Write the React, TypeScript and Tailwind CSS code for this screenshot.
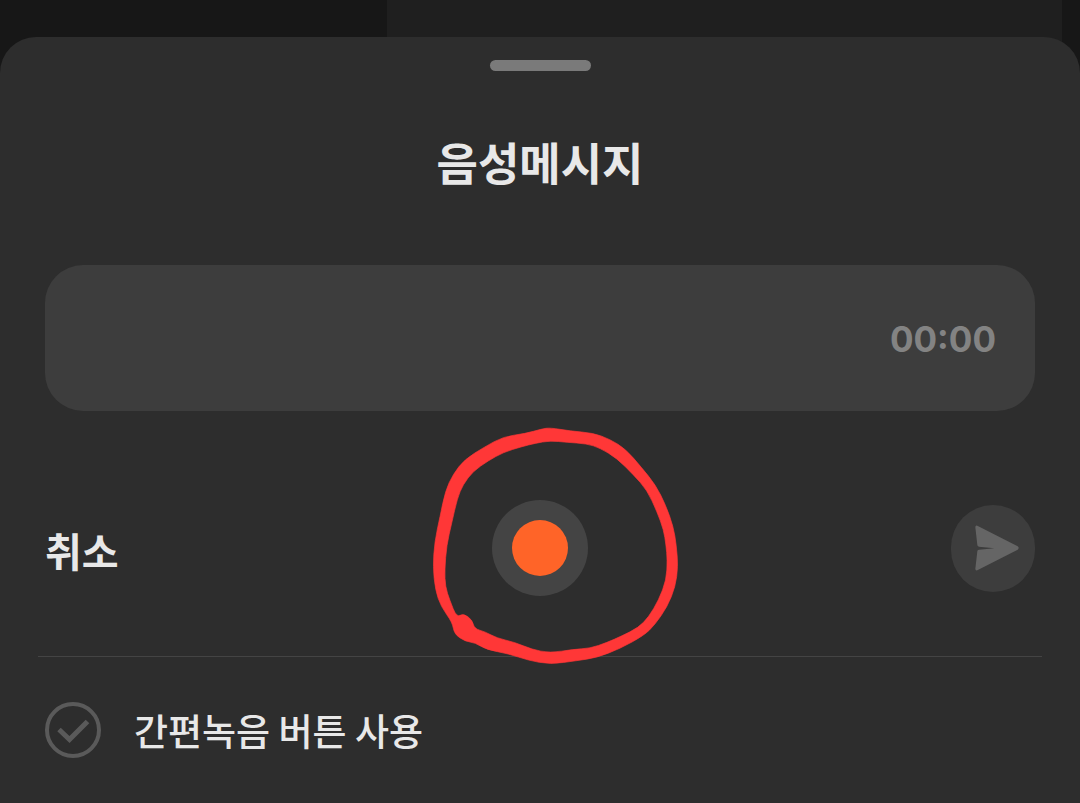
import { useEffect, useState } from "react";

type Point = [number, number];

const ringOuter: Point[] = [
  [390, 23], [450, 33], [520, 39], [570, 58], [617, 87], [665, 143], [707, 195],
  [737, 255], [760, 320], [769, 375], [774, 440], [766, 500], [742, 560],
  [704, 615], [672, 646], [600, 686], [530, 713], [470, 722], [390, 733],
  [325, 721], [265, 701], [200, 689], [165, 668], [135, 664], [103, 642],
  [97, 607], [63, 560], [46, 510], [39, 440], [44, 365], [60, 290], [76, 213],
  [99, 163], [134, 118], [195, 80], [250, 50], [315, 41], [365, 27],
];

const ringInner: Point[] = [
  [390, 62], [440, 67], [500, 71], [540, 84], [591, 115], [641, 165],
  [681, 210], [711, 275], [731, 330], [738, 375], [742, 420], [739, 480],
  [716, 540], [686, 591], [655, 623], [605, 648], [560, 668], [510, 685],
  [460, 688], [390, 699], [335, 688], [285, 667], [230, 654], [195, 635],
  [163, 626], [157, 600], [130, 580], [110, 592], [89, 540], [76, 500],
  [74, 450], [80, 375], [95, 310], [112, 235], [129, 194], [159, 154],
  [205, 122], [250, 97], [305, 80], [345, 70],
];

// closed curve through the midpoints of the list
function smooth(points: Point[]) {
  const mid = (a: Point, b: Point) => `${(a[0] + b[0]) / 2} ${(a[1] + b[1]) / 2}`;
  const last = points[points.length - 1];
  let d = `M${mid(last, points[0])}`;
  points.forEach((p, i) => {
    d += ` Q${p[0]} ${p[1]} ${mid(p, points[(i + 1) % points.length])}`;
  });
  return d + " Z";
}

function formatTime(total: number) {
  const m = String(Math.floor(total / 60)).padStart(2, "0");
  const s = String(total % 60).padStart(2, "0");
  return `${m}:${s}`;
}

function SendIcon() {
  return (
    <svg viewBox="0 0 132 138" className="h-[46px] w-[44px]" fill="#656565" aria-hidden="true">
      <path d="M7 2 L128 64 Q134 69 128 74 L7 136 Q1 138 1 131 L7 79 Q7 75 12 74 L58 70 L12 65 Q7 64 7 60 L1 7 Q1 0 7 2 Z" />
    </svg>
  );
}

// freehand marker ring around the record button
function MarkerRing() {
  return (
    <svg
      viewBox="-60 9 840 750"
      className="pointer-events-none absolute top-1/2 left-1/2 h-[250px] w-[280px] max-w-none -translate-x-1/2 -translate-y-1/2"
      fill="#ff3737"
      stroke="#ff3737"
      strokeWidth="2"
      aria-hidden="true"
    >
      <path fillRule="evenodd" d={`${smooth(ringOuter)} ${smooth(ringInner)}`} />
    </svg>
  );
}

export default function App() {
  const [recording, setRecording] = useState(false);
  const [seconds, setSeconds] = useState(0);

  useEffect(() => {
    if (!recording) return;
    const id = setInterval(() => setSeconds((s) => s + 1), 1000);
    return () => clearInterval(id);
  }, [recording]);

  function cancel() {
    setRecording(false);
    setSeconds(0);
  }

  return (
    <div className="relative flex min-h-screen flex-col bg-[#171717] pt-[37px] font-['Noto_Sans_CJK_KR',sans-serif] text-[#e8e8e8]">
      {/* dimmed chat behind the sheet */}
      <div className="absolute inset-0 flex pr-[18px] pl-[387px]">
        <div className="flex-1 bg-[#1f1f1f]" />
      </div>

      <main className="relative flex flex-1 flex-col rounded-t-[36px] bg-[#2d2d2d] pt-[23px]">
        <div className="mx-auto h-[11px] w-[101px] rounded-full bg-[#7a7a7a]" />

        <h1 className="mt-[58px] text-center text-[45px] leading-[66px] font-bold">
          음성메시지
        </h1>

        <div className="mx-[45px] mt-[70px] flex h-[146px] items-center justify-end rounded-[38px] bg-[#3d3d3d] px-[39px]">
          <time className="pt-0.5 font-['Inter',sans-serif] text-[35px] leading-[56px] font-bold text-[#838383]">
            {formatTime(seconds)}
          </time>
        </div>

        <div className="mx-[45px] mt-[89px] grid grid-cols-3 items-center">
          <button
            type="button"
            onClick={cancel}
            className="justify-self-start pt-1 text-[40px] leading-[56px] font-bold"
          >
            취소
          </button>

          <div className="relative justify-self-center">
            <button
              type="button"
              aria-label="녹음"
              onClick={() => setRecording(!recording)}
              className="flex size-24 items-center justify-center rounded-full bg-[#444444]"
            >
              <span className="size-14 rounded-full bg-[#ff6428]" />
            </button>
            <MarkerRing />
          </div>

          <button
            type="button"
            aria-label="보내기"
            className="flex h-[87px] w-[84px] items-center justify-center justify-self-end rounded-full bg-[#3d3d3d] pl-2"
          >
            <SendIcon />
          </button>
        </div>

        <hr className="mx-[38px] mt-[60px] border-t border-[#444444]" />

        <div className="flex items-center px-[45px] py-[45px]">
          <div className="relative size-14">
            <input
              id="quick-record"
              type="checkbox"
              className="block size-14 appearance-none rounded-full border-4 border-[#5a5a5a] checked:border-[#ff6428]"
            />
            <svg
              viewBox="0 0 56 56"
              className="pointer-events-none absolute inset-0"
              fill="none"
              stroke="#5a5a5a"
              strokeWidth="5"
              aria-hidden="true"
            >
              <path d="M14 27.5 L24.5 37.5 L42.5 19.5" />
            </svg>
          </div>
          <label htmlFor="quick-record" className="pl-[33px] text-[37px] leading-[56px] font-medium">
            간편녹음 버튼 사용
          </label>
        </div>
      </main>
    </div>
  );
}
